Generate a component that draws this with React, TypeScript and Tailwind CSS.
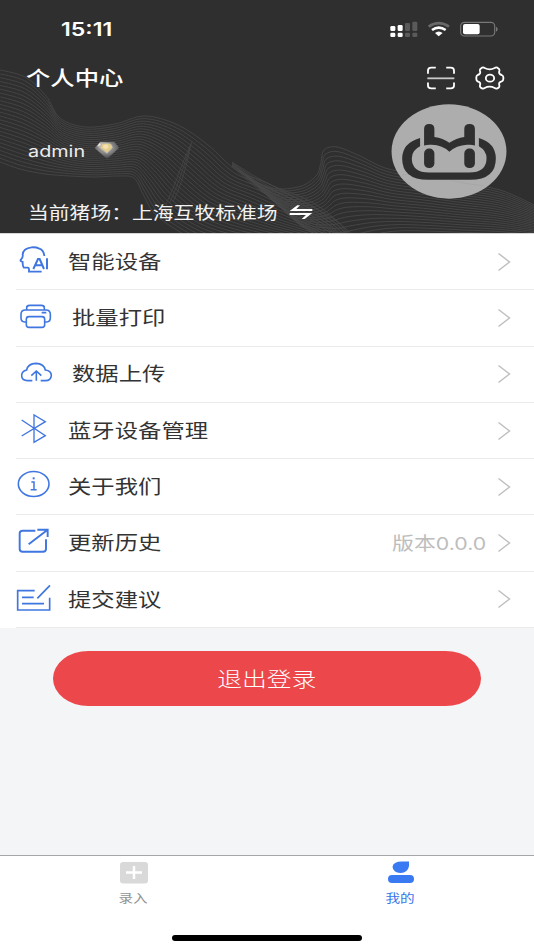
import type { ReactNode } from 'react';

type Pt = [number, number];

function smooth(p: Pt[]): string {
  let d = `M${p[0][0].toFixed(1)} ${p[0][1].toFixed(1)}`;
  for (let i = 0; i < p.length - 1; i++) {
    const a = p[Math.max(0, i - 1)];
    const b = p[i];
    const c = p[i + 1];
    const e = p[Math.min(p.length - 1, i + 2)];
    const n = [
      b[0] + (c[0] - a[0]) / 6, b[1] + (c[1] - a[1]) / 6,
      c[0] - (e[0] - b[0]) / 6, c[1] - (e[1] - b[1]) / 6,
      c[0], c[1],
    ].map((v) => v.toFixed(1));
    d += `C${n.join(' ')}`;
  }
  return d;
}

function family(a: Pt[], b: Pt[], count: number): string[] {
  return Array.from({ length: count }, (_, k) => {
    const t = k / (count - 1);
    return smooth(a.map((p, i): Pt => [p[0] + (b[i][0] - p[0]) * t, p[1] + (b[i][1] - p[1]) * t]));
  });
}

const leftWave = family(
  [[-5, 69], [25, 77], [46, 96], [60, 118], [85, 127], [115, 124], [145, 116], [178, 125], [208, 145], [236, 170], [267, 183], [305, 203], [335, 220], [350, 236]],
  [[-5, 160], [20, 169], [45, 174], [70, 176], [95, 177], [118, 176], [134, 178], [143, 194], [155, 214], [180, 232], [205, 243], [240, 248], [280, 250], [310, 254]],
  25,
);
const rightWave = family(
  [[234, 166], [267, 187], [298, 187], [316, 176], [321, 162], [324, 150], [337, 147], [360, 156], [385, 168], [415, 174], [455, 182], [500, 190], [540, 208]],
  [[296, 222], [308, 230], [320, 236], [330, 240], [338, 244], [346, 246], [356, 244], [376, 238], [400, 234], [430, 234], [465, 235], [500, 236], [540, 238]],
  22,
);
const bandWave = family(
  [[232, 166], [262, 192], [300, 212], [335, 236]],
  [[232, 162], [267, 183], [315, 204], [354, 236]],
  6,
);
const foldWave = family(
  [[192, 142], [186, 155], [180, 170], [174, 186], [166, 204]],
  [[190, 147], [188, 158], [184, 173], [179, 188], [173, 202]],
  3,
);

function Waves() {
  return (
    <svg className="absolute inset-0" width="534" height="233" viewBox="0 0 534 233" fill="none" strokeWidth="0.8">
      {leftWave.map((d, i) => <path key={i} d={d} stroke="#494949" />)}
      {rightWave.map((d, i) => <path key={i} d={d} stroke="#4a4a4a" />)}
      {bandWave.map((d, i) => <path key={i} d={d} stroke="#484848" />)}
      {foldWave.map((d, i) => <path key={i} d={d} stroke="#464646" />)}
    </svg>
  );
}

function Wide({ children, className = '' }: { children: ReactNode; className?: string }) {
  return <span className={`inline-block origin-left scale-x-[1.217] whitespace-nowrap ${className}`}>{children}</span>;
}

function StatusIcons() {
  return (
    <svg className="mt-px" width="110" height="20" viewBox="366 60 330 60">
      <g fill="#fff">
        <rect x="370" y="78" width="15" height="15" rx="4" />
        <rect x="392" y="75" width="15" height="18" rx="4" />
        <rect x="370" y="98" width="15" height="13" rx="4" />
        <rect x="392" y="98" width="15" height="13" rx="4" />
      </g>
      <g fill="#5a5a5a">
        <rect x="414" y="69" width="15" height="24" rx="4" />
        <rect x="436" y="65" width="15" height="28" rx="4" />
        <rect x="414" y="98" width="15" height="13" rx="4" />
        <rect x="436" y="98" width="15" height="13" rx="4" />
      </g>
      <path d="M485 80Q515 59 546 80" fill="none" stroke="#686868" strokeWidth="8" />
      <path d="M495 90Q515 76 536 90" fill="none" stroke="#fff" strokeWidth="8" />
      <path d="M504 99Q515 90 527 99L515 109Z" fill="#fff" />
      <rect x="581" y="67" width="102" height="41" rx="11" fill="none" stroke="#777" strokeWidth="3.5" />
      <rect x="588" y="72" width="50" height="31" rx="6" fill="#fff" />
      <path d="M687 80Q692 82 692 88T687 95Z" fill="#777" />
    </svg>
  );
}

function ScanIcon() {
  return (
    <svg width="28" height="24" viewBox="479 197 86 72" fill="none" stroke="#fff" strokeWidth="5.5">
      <path d="M506 201H492Q482 201 482 211V220M538 201H552Q562 201 562 211V220M482 247V256Q482 265 492 265H506M562 247V256Q562 265 552 265H538" />
      <path d="M480 234H563" stroke="#c9c9c9" />
    </svg>
  );
}

function GearIcon() {
  return (
    <svg width="30" height="24" viewBox="625 197 90 72" fill="none" stroke="#fff" strokeWidth="5.5" strokeLinejoin="round">
      <path d="M646 202Q650 200 654 203Q669 211 684 203Q688 200 692 202L696 205Q699 208 698 212Q695 221 705 224Q710 226 710 231V236Q710 241 705 243Q695 246 698 255Q699 259 696 262L692 264Q688 266 684 263Q669 255 654 263Q650 266 646 264L642 262Q639 259 640 255Q643 246 633 243Q629 241 629 236V231Q629 226 633 224Q643 221 640 212Q639 208 642 205Z" />
      <ellipse cx="670" cy="233.500" rx="12.500" ry="10.500" />
    </svg>
  );
}

function Avatar() {
  return (
    <svg width="116" height="95" viewBox="372 24 348 286">
      <ellipse cx="546" cy="167" rx="173" ry="142" fill="#adadad" />
      <path d="M405 238Q475 221 547 251Q580 263 650 270" stroke="#a3a3a3" strokeWidth="2" fill="none" />
      <path d="M459 126Q405 141 405 188Q405 252 483 252H610Q687 252 687 188Q687 141 636 126V151Q659 164 659 187Q659 230 606 230H486Q434 230 434 187Q434 163 459 151Z" fill="#2f2f2f" />
      <path d="M471 149V99Q471 84 486.500 84T502 99V123Q528 126 547 141Q568 126 592 123V99Q592 84 608 84T624 99V149Q613 145 600 147Q568 149 547 168Q527 148 494 147Q482 146 471 149Z" fill="#2f2f2f" />
      <rect x="471" y="158" width="31" height="59" rx="15" fill="#2f2f2f" />
      <rect x="592" y="158" width="32" height="59" rx="15" fill="#2f2f2f" />
    </svg>
  );
}

function Gem() {
  return (
    <svg width="26" height="20" viewBox="283 78 78 60">
      <defs>
        <radialGradient id="gem" cx="0.45" cy="0.35" r="0.65">
          <stop offset="0" stopColor="#b5b2aa" />
          <stop offset="0.5" stopColor="#858588" />
          <stop offset="1" stopColor="#404040" />
        </radialGradient>
      </defs>
      <path d="M301 83H344L359 101L322 135L285 102Z" fill="url(#gem)" />
      <path d="M303 85L293 97L302 104L322 119L339 102L335 90L322 86Z" fill="#b9b5ab" />
      <path d="M308 90L330 89L339 99L322 116L303 101Z" fill="#e3cd8d" />
      <path d="M312 93L322 91L328 98L319 106L309 100Z" fill="#f3e2b0" />
      <path d="M301 86L293 96L303 94Z" fill="#eee" />
    </svg>
  );
}

function RowIcon({ top, width = 4.8, children }: { top: number; width?: number; children: ReactNode }) {
  return (
    <svg className="h-[56.4px] w-[52px] shrink-0" viewBox={`48 ${top} 156 169.200`} fill="none" stroke="#4076e0" strokeWidth={width}>
      {children}
    </svg>
  );
}

const items: { label: string; icon: ReactNode; shift?: boolean; note?: string }[] = [
  {
    label: '智能设备',
    icon: (
      <RowIcon top={2} width={5.5}>
        <path d="M133 68Q131 50 118 46Q108 41 95 42Q69 45 68 64Q70 72 62 80Q60 84 68 86V92Q69 101 72 103H83Q87 103 87 109V115H125" />
        <path d="M100 107L114 77H119L132 107M104 96H128M141 75V108" strokeWidth="6" />
      </RowIcon>
    ),
  },
  {
    label: '批量打印',
    shift: true,
    icon: (
      <RowIcon top={171}>
        <path d="M80 231V224Q80 217 89 217H124Q133 217 133 224V231M79 267H74Q63 266 63 255V244Q63 231 76 231H138Q151 231 151 244V255Q151 266 140 267H134M125 239H139" />
        <rect x="79" y="251" width="55" height="32" rx="8" />
      </RowIcon>
    ),
  },
  {
    label: '数据上传',
    shift: true,
    icon: (
      <RowIcon top={340}>
        <path d="M97 441H83Q65 440 65 426Q65 412 80 409Q83 390 108 389Q132 390 136 409Q154 412 154 425Q153 441 136 441H122M109 441V413M94 426L109 412L124 426" />
      </RowIcon>
    ),
  },
  {
    label: '蓝牙设备管理',
    icon: (
      <RowIcon top={-1} width={4}>
        <path d="M65 50L136 97L102 117V35L136 55L65 98" />
      </RowIcon>
    ),
  },
  {
    label: '关于我们',
    icon: (
      <RowIcon top={168}>
        <ellipse cx="101" cy="243" rx="46" ry="37.500" />
        <path d="M94 237H102V259M92 260H110" strokeWidth="4.500" />
        <path d="M98 226H104" strokeWidth="6" />
      </RowIcon>
    ),
  },
  {
    label: '更新历史',
    note: '版本0.0.0',
    icon: (
      <RowIcon top={1} width={5.8}>
        <path d="M106 48H68Q59 48 59 56V103Q59 111 68 111H129Q138 111 138 103V74" />
        <path d="M86 89L142 46M112 45H143V67" />
      </RowIcon>
    ),
  },
  {
    label: '提交建议',
    icon: (
      <RowIcon top={170} width={5}>
        <path d="M104 226H53V284H149V247M66 246H101M66 265H132M112 249L150 210" />
      </RowIcon>
    ),
  },
];

function Chevron() {
  return (
    <svg className="mt-px" width="14" height="20" viewBox="0 0 14 20" fill="none" stroke="#bfbfbf" strokeWidth="1.5">
      <path d="M1.500 1.500L12.500 10L1.500 18.500" />
    </svg>
  );
}

export default function App() {
  return (
    <div className="flex h-[950px] w-[534px] flex-col overflow-hidden bg-[#f4f5f7] font-['Noto_Sans_CJK_SC',sans-serif] text-[#333]">
      <header className="relative h-[233px] shrink-0 bg-[#2f2f2f] text-white">
        <Waves />
        <div className="relative flex h-full flex-col">
          <div className="flex h-[58px] items-center justify-between pr-[35px] pl-[61px]">
            <Wide className="mt-px font-['Inter',sans-serif] text-[19px] leading-5 font-semibold">15:11</Wide>
            <StatusIcons />
          </div>
          <div className="flex h-10 items-center justify-between pr-[29px] pl-[25.500px]">
            <Wide className="text-[20px] leading-6 font-medium">个人中心</Wide>
            <div className="flex items-center gap-5">
              <ScanIcon />
              <GearIcon />
            </div>
          </div>
          <div className="flex h-[102px] items-start justify-between pt-[5.500px] pr-[27px] pl-7">
            <div className="flex h-[93px] items-center">
              <div className="w-[66px] text-[#ededed]">
                <Wide className="font-['Inter',sans-serif] text-[16.300px] leading-6">admin</Wide>
              </div>
              <Gem />
            </div>
            <Avatar />
          </div>
          <div className="flex h-[24px] items-center pl-7 text-[17.1px] leading-6 text-[#f2f2f2]">
            <Wide className="w-[86px]">当前猪场：</Wide>
            <Wide className="ml-[18px] w-[119.700px]">上海互牧标准场</Wide>
            <svg className="ml-[37px]" width="24" height="16" viewBox="66 328 72 44" fill="#fff">
              <path d="M91 330H99L88 341H136V347H68ZM68 353H136L113 371H104L117 359H68Z" />
            </svg>
          </div>
        </div>
      </header>
      <main className="flex flex-1 flex-col">
        <div className="border-t border-[#d6d6d6] bg-white">
          {items.map((it) => (
            <div key={it.label} className="flex h-[56.3px] pl-4">
              {it.icon}
              <div className={`flex flex-1 items-center pr-[23px] pb-[2px] ${it.shift ? 'pl-1' : ''}`}>
                <Wide className="-ml-[0.5px] pb-[0.5px] text-[19.2px] leading-6">{it.label}</Wide>
                <div className="flex-1" />
                {it.note && (
                  <div className="w-[105px] text-[#bdbdbd]">
                    <Wide className="text-[18px] leading-6">
                      版本<span className="font-['Inter',sans-serif] text-[17.5px]">0.0.0</span>
                    </Wide>
                  </div>
                )}
                <Chevron />
              </div>
              <div className="-ml-[518px] w-[518px] self-end border-b border-[#ebebeb]" />
            </div>
          ))}
        </div>
        <button className="mt-[23px] ml-[53px] flex h-[55px] w-[428px] items-center justify-center rounded-[36px/28px] bg-[#ec474b] pb-[2px] text-white">
          <span className="inline-block scale-x-[1.217] text-[20.400px] leading-6 font-light">退出登录</span>
        </button>
      </main>
      <footer className="flex h-[95px] shrink-0 flex-col border-t border-[#a6a6a6] bg-white">
        <nav className="grid grid-cols-2 text-[12px] leading-[18px]">
          <div className="flex flex-col items-center pt-[5px] text-[#929292]">
            <svg width="28" height="23" viewBox="0 0 28 23">
              <rect y="1" width="28" height="21.500" rx="3" fill="#d9d9d9" />
              <path d="M6 11.500H22M14 5V18" stroke="#fff" strokeWidth="2.500" />
            </svg>
            <span className="mt-[5px] inline-block scale-x-[1.217]">录入</span>
          </div>
          <div className="flex flex-col items-center pt-[5px] text-[#3974e8]">
            <svg width="28" height="23" viewBox="0 0 28 23" fill="#3979f2">
              <path d="M22 0.500V5Q21 11.500 13.500 12Q6 11.500 5.500 6Q6 0.500 15 0.500Z" />
              <rect x="1" y="14" width="26" height="8" rx="4" />
            </svg>
            <span className="mt-[5px] inline-block scale-x-[1.217]">我的</span>
          </div>
        </nav>
        <div className="mt-auto mb-[9px] ml-[172px] h-[6px] w-[190px] rounded-full bg-black" />
      </footer>
    </div>
  );
}
